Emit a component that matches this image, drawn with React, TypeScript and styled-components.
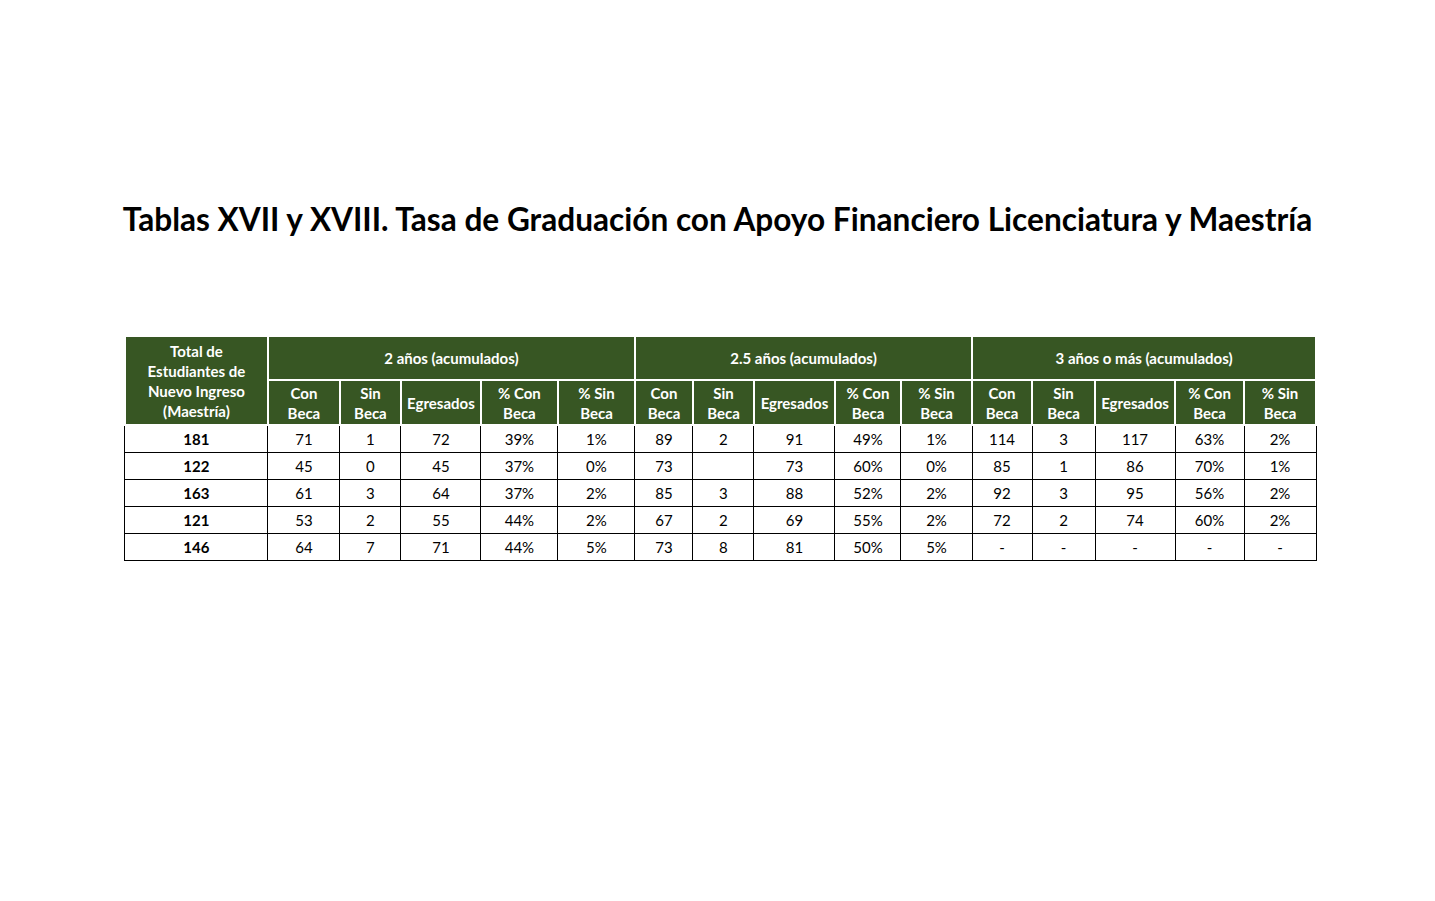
import styled, { createGlobalStyle } from "styled-components";

const GlobalStyle = createGlobalStyle`
  html, body {
    margin: 0;
    padding: 0;
    background: #fff;
  }
  body {
    font-family: "Lato", "Open Sans", sans-serif;
    color: #000;
  }
`;

const Page = styled.div`
  width: 1435px;
  height: 901px;
  display: flex;
  flex-direction: column;
  align-items: center;
`;

const Title = styled.h1`
  margin: 198px 0 0;
  height: 42px;
  line-height: 42px;
  font-size: 31.6px;
  font-weight: 700;
  white-space: nowrap;
`;

const Table = styled.table`
  margin-top: 95px;
  margin-left: 6px;
  border-collapse: collapse;
  table-layout: fixed;
  width: 1191px;
  font-size: 15px;
`;

const HeadCell = styled.th<{ $h?: number }>`
  background: #375623;
  color: #fff;
  font-weight: 700;
  line-height: 20px;
  height: ${(p) => p.$h ?? 42}px;
  padding: 0;
  border: 2px solid #fff;
  text-align: center;
  vertical-align: middle;
`;

const Cell = styled.td<{ $bold?: boolean }>`
  height: 26px;
  padding: 0;
  border: 1px solid #000;
  text-align: center;
  vertical-align: middle;
  font-weight: ${(p) => (p.$bold ? 700 : 400)};
`;

const widths = [143, 72, 61, 80, 77, 77, 58, 61, 81, 66, 71, 60, 63, 80, 69, 72];

const groups = ["2 años (acumulados)", "2.5 años (acumulados)", "3 años o más (acumulados)"];

const subHeads: [string, string?][] = [
  ["Con", "Beca"],
  ["Sin", "Beca"],
  ["Egresados"],
  ["% Con", "Beca"],
  ["% Sin", "Beca"],
];

const rows: string[][] = [
  ["181", "71", "1", "72", "39%", "1%", "89", "2", "91", "49%", "1%", "114", "3", "117", "63%", "2%"],
  ["122", "45", "0", "45", "37%", "0%", "73", "", "73", "60%", "0%", "85", "1", "86", "70%", "1%"],
  ["163", "61", "3", "64", "37%", "2%", "85", "3", "88", "52%", "2%", "92", "3", "95", "56%", "2%"],
  ["121", "53", "2", "55", "44%", "2%", "67", "2", "69", "55%", "2%", "72", "2", "74", "60%", "2%"],
  ["146", "64", "7", "71", "44%", "5%", "73", "8", "81", "50%", "5%", "-", "-", "-", "-", "-"],
];

export default function App() {
  return (
    <>
      <GlobalStyle />
      <Page>
        <Title>
          Tablas XVII y XVIII. Tasa de Graduación con Apoyo Financiero Licenciatura y Maestría
        </Title>
        <Table>
          <colgroup>
            {widths.map((w, i) => (
              <col key={i} style={{ width: w }} />
            ))}
          </colgroup>
          <thead>
            <tr>
              <HeadCell rowSpan={2}>
                Total de
                <br />
                Estudiantes de
                <br />
                Nuevo Ingreso
                <br />
                (Maestría)
              </HeadCell>
              {groups.map((g) => (
                <HeadCell key={g} colSpan={5} $h={42}>
                  {g}
                </HeadCell>
              ))}
            </tr>
            <tr>
              {groups.map((g) =>
                subHeads.map(([a, b]) => (
                  <HeadCell key={g + a} $h={43}>
                    {a}
                    {b && (
                      <>
                        <br />
                        {b}
                      </>
                    )}
                  </HeadCell>
                ))
              )}
            </tr>
          </thead>
          <tbody>
            {rows.map((r, i) => (
              <tr key={i}>
                {r.map((v, j) => (
                  <Cell key={j} $bold={j === 0}>
                    {v}
                  </Cell>
                ))}
              </tr>
            ))}
          </tbody>
        </Table>
      </Page>
    </>
  );
}
